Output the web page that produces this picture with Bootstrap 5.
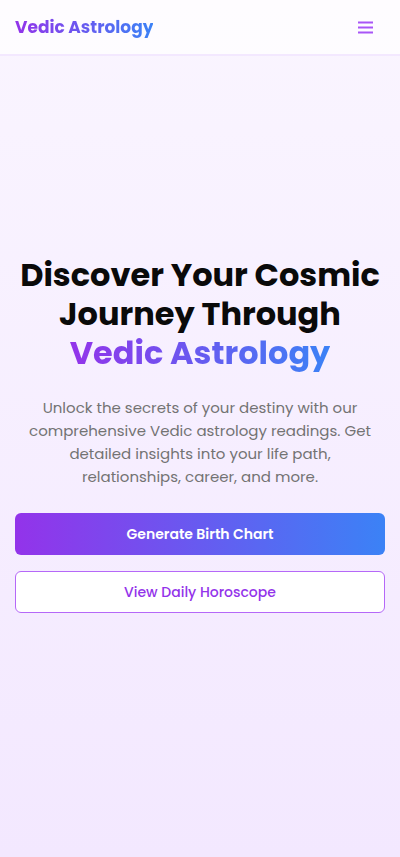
<!DOCTYPE html>
<html lang="en">
<head>
<meta charset="utf-8">
<meta name="viewport" content="width=device-width, initial-scale=1">
<title>Vedic Astrology</title>
<link href="https://cdn.jsdelivr.net/npm/bootstrap@5.3.0/dist/css/bootstrap.min.css" rel="stylesheet">
<style>
  :root { --violet: #9333ea; --azure: #3b82f6; }
  body {
    font-family: Poppins, Inter, "Open Sans", sans-serif;
    color: #0a0a0a;
    background: linear-gradient(to bottom, #faf5ff, #f3e8ff);
  }
  .site-bar { background: rgba(255, 255, 255, .7); border-bottom: 2px solid #f3e8ff; padding: 0 15px; height: 56px; }
  .brand-name { font-size: 17px; line-height: 26px; font-weight: 700; }
  .gradient-text {
    background: linear-gradient(to right, var(--violet), var(--azure));
    -webkit-background-clip: text;
    background-clip: text;
    color: transparent;
  }
  .menu-btn { width: 38px; height: 38px; color: #a855f7; }
  .hero { padding: 0 15px 46px; }
  .hero-title { font-size: 32px; line-height: 39px; font-weight: 700; margin-bottom: 24px; }
  .hero-copy { font-size: 15px; line-height: 23px; color: #737373; margin-bottom: 25px; }
  .hero-btn { height: 42px; font-size: 14px; line-height: 20px; border-radius: 6px; }
  .hero-btn-main, .hero-btn-main:hover { background: linear-gradient(to right, var(--violet), var(--azure)); color: #fff; border: 0; font-weight: 600; }
  .hero-btn-alt, .hero-btn-alt:hover { background: #fff; color: var(--violet); border: 1px solid #b568f8; font-weight: 500; }
</style>
</head>
<body class="min-vh-100 d-flex flex-column">
<header class="site-bar d-flex align-items-center justify-content-between">
  <a href="#" class="brand-name gradient-text text-decoration-none">Vedic Astrology</a>
  <button type="button" class="menu-btn btn p-0 border-0 d-flex align-items-center justify-content-center" aria-label="Open menu">
    <svg width="22" height="22" viewBox="0 0 22 22" fill="none" stroke="currentColor" stroke-width="1.9" aria-hidden="true"><path d="M3 6.500H18M3 11.500H18M3 16.500H18"/></svg>
  </button>
</header>
<main class="hero flex-grow-1 d-flex flex-column justify-content-center text-center">
  <h1 class="hero-title">Discover Your Cosmic<br>Journey Through<br><span class="gradient-text">Vedic Astrology</span></h1>
  <p class="hero-copy">Unlock the secrets of your destiny with our<br>comprehensive Vedic astrology readings. Get<br>detailed insights into your life path,<br>relationships, career, and more.</p>
  <div class="d-grid gap-3">
    <button type="button" class="btn hero-btn hero-btn-main">Generate Birth Chart</button>
    <button type="button" class="btn hero-btn hero-btn-alt">View Daily Horoscope</button>
  </div>
</main>
<script src="https://cdn.jsdelivr.net/npm/bootstrap@5.3.0/dist/js/bootstrap.bundle.min.js"></script>
</body>
</html>
